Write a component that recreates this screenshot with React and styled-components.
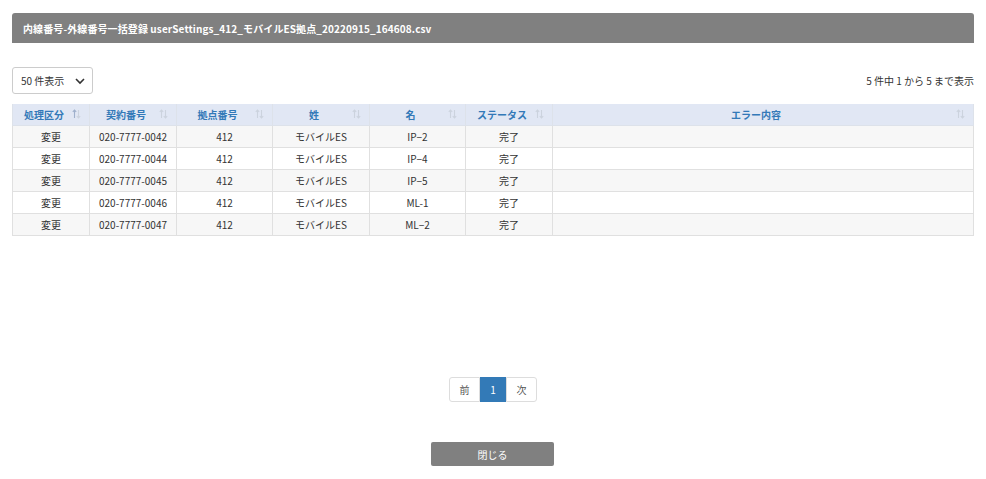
import styled, { createGlobalStyle } from "styled-components";

const GlobalStyle = createGlobalStyle`
  body {
    margin: 0;
    background: #fff;
    font-family: "Noto Sans CJK JP", "Liberation Sans", sans-serif;
    color: #333;
  }
`;

const Page = styled.div`
  width: 986px;
  height: 479px;
  padding: 13px 12px 0 12px;
  box-sizing: border-box;
  display: flex;
  flex-direction: column;
`;

const TitleBar = styled.div`
  height: 30px;
  background: #808080;
  border-radius: 3px 3px 0 0;
  display: flex;
  align-items: center;
  padding-left: 11px;
  color: #fff;
  font-size: 10px;
  font-weight: bold;
  letter-spacing: 0.1px;
`;

const Controls = styled.div`
  display: flex;
  justify-content: space-between;
  align-items: center;
  margin-top: 24px;
`;

const Select = styled.div`
  width: 81px;
  height: 27px;
  box-sizing: border-box;
  border: 1px solid #ccc;
  border-radius: 3px;
  display: flex;
  align-items: center;
  justify-content: space-between;
  padding: 0 6px 0 8px;
  font-size: 10px;
  color: #333;
`;

const Info = styled.div`
  font-size: 10px;
  color: #333;
`;

const Table = styled.table`
  margin-top: 10px;
  width: 962px;
  border-collapse: collapse;
  font-size: 10px;
  table-layout: fixed;
`;

const Th = styled.th`
  position: relative;
  height: 21px;
  padding: 0 18px 0 4px;
  background: #e1e7f4;
  color: #3379b8;
  font-weight: bold;
  border: 1px solid #dde2ea;
  border-top: none;
  text-align: center;
`;

const SortIcon = styled.svg`
  position: absolute;
  right: 8px;
  top: 5px;
`;

const Tr = styled.tr`
  background: ${(p) => (p.$odd ? "#f7f7f7" : "#fff")};
`;

const Td = styled.td`
  height: 21px;
  padding: 0 4px;
  border: 1px solid #e0e0e0;
  text-align: center;
  color: #333;
`;

const Pager = styled.div`
  margin-top: 141px;
  display: flex;
  justify-content: center;
`;

const PageBtn = styled.div`
  height: 25px;
  box-sizing: border-box;
  display: flex;
  align-items: center;
  justify-content: center;
  width: ${(p) => p.$w}px;
  font-size: 10px;
  border: 1px solid ${(p) => (p.$active ? "#337ab7" : "#ddd")};
  background: ${(p) => (p.$active ? "#337ab7" : "#fff")};
  color: ${(p) => (p.$active ? "#fff" : "#555")};
  &:first-child {
    border-radius: 3px 0 0 3px;
  }
  &:last-child {
    border-radius: 0 3px 3px 0;
  }
`;

const Footer = styled.div`
  margin-top: 40px;
  display: flex;
  justify-content: center;
`;

const CloseButton = styled.button`
  width: 123px;
  height: 24px;
  margin-left: -1px;
  border: none;
  border-radius: 2px;
  background: #808080;
  color: #fff;
  font-family: inherit;
  font-size: 10px;
`;

const cols = [
  { label: "処理区分", w: 77, sorted: true },
  { label: "契約番号", w: 87 },
  { label: "拠点番号", w: 96 },
  { label: "姓", w: 97 },
  { label: "名", w: 96 },
  { label: "ステータス", w: 87 },
  { label: "エラー内容" },
];

const rows = [
  ["変更", "020-7777-0042", "412", "モバイルES", "IP−2", "完了", ""],
  ["変更", "020-7777-0044", "412", "モバイルES", "IP−4", "完了", ""],
  ["変更", "020-7777-0045", "412", "モバイルES", "IP−5", "完了", ""],
  ["変更", "020-7777-0046", "412", "モバイルES", "ML-1", "完了", ""],
  ["変更", "020-7777-0047", "412", "モバイルES", "ML−2", "完了", ""],
];

const Sort = ({ sorted }) => (
  <SortIcon width="9" height="10" viewBox="0 0 9 10">
    <path
      d="M2.5 1 L2.5 9 M0.8 2.8 L2.5 1 L4.2 2.8"
      stroke={sorted ? "#9fb0cc" : "#ccd3de"}
      strokeWidth="1.1"
      fill="none"
    />
    <path
      d="M6.5 1 L6.5 9 M4.8 7.2 L6.5 9 L8.2 7.2"
      stroke="#ccd3de"
      strokeWidth="1.1"
      fill="none"
    />
  </SortIcon>
);

const App = () => {
  return (
    <Page>
      <GlobalStyle />
      <TitleBar>
        内線番号-外線番号一括登録 userSettings_412_モバイルES拠点_20220915_164608.csv
      </TitleBar>
      <Controls>
        <Select>
          <span>50 件表示</span>
          <svg width="12" height="12" viewBox="0 0 12 12">
            <path d="M2 4 L6 8 L10 4" stroke="#333" strokeWidth="1.6" fill="none" />
          </svg>
        </Select>
        <Info>5 件中 1 から 5 まで表示</Info>
      </Controls>
      <Table>
        <colgroup>
          {cols.map((c, i) => (
            <col key={i} style={c.w ? { width: c.w } : undefined} />
          ))}
        </colgroup>
        <thead>
          <tr>
            {cols.map((c, i) => (
              <Th key={i}>
                {c.label}
                <Sort sorted={c.sorted} />
              </Th>
            ))}
          </tr>
        </thead>
        <tbody>
          {rows.map((r, i) => (
            <Tr key={i} $odd={i % 2 === 0}>
              {r.map((v, j) => (
                <Td key={j}>{v}</Td>
              ))}
            </Tr>
          ))}
        </tbody>
      </Table>
      <Pager>
        <PageBtn $w={31}>前</PageBtn>
        <PageBtn $w={26} $active>1</PageBtn>
        <PageBtn $w={31}>次</PageBtn>
      </Pager>
      <Footer>
        <CloseButton>閉じる</CloseButton>
      </Footer>
    </Page>
  );
};

export default App;
